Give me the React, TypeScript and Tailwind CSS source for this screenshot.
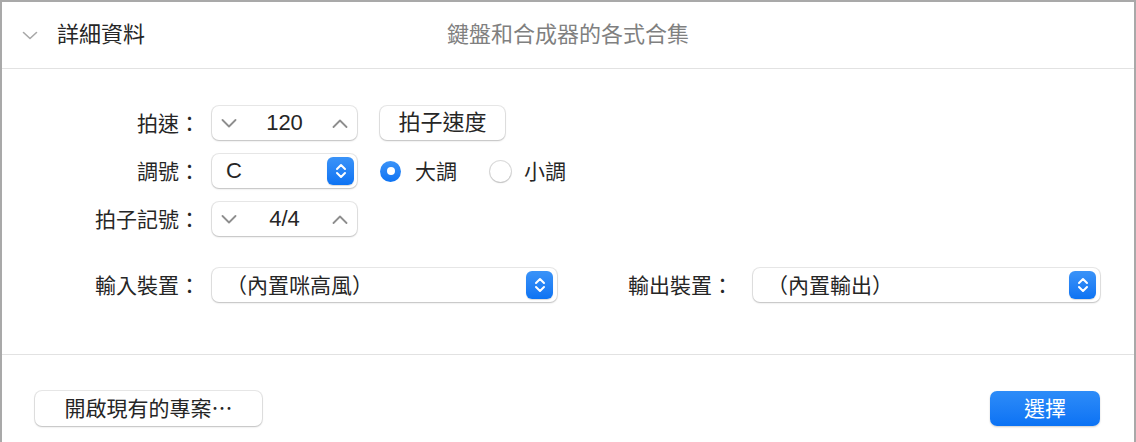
import React from "react";

const font = { fontFamily: '"Liberation Sans", "Noto Sans CJK TC", sans-serif' };

function Chevron({ up = false, className = "" }: { up?: boolean; className?: string }) {
  return (
    <svg width="16" height="9" viewBox="0 0 16 9" className={className}>
      <path
        d={up ? "M1.5 8 L8 1.5 L14.5 8" : "M1.5 1 L8 7.5 L14.5 1"}
        fill="none"
        stroke="#8e8e8e"
        strokeWidth="1.8"
        strokeLinecap="round"
        strokeLinejoin="round"
      />
    </svg>
  );
}

function BlueArrows() {
  return (
    <div className="w-[27px] h-[28px] rounded-[6px] bg-linear-to-b from-[#3a93f8] to-[#0b73f3] flex items-center justify-center shadow-[0_1px_1px_rgba(0,0,0,0.15)]">
      <svg width="14" height="20" viewBox="0 0 14 20">
        <path d="M3 8 L7 4 L11 8" fill="none" stroke="#fff" strokeWidth="2" strokeLinecap="round" strokeLinejoin="round" />
        <path d="M3 12 L7 16 L11 12" fill="none" stroke="#fff" strokeWidth="2" strokeLinecap="round" strokeLinejoin="round" />
      </svg>
    </div>
  );
}

const ctrl =
  "bg-white rounded-[7px] shadow-[0_0_0_1px_rgba(0,0,0,0.09),0_1px_2px_rgba(0,0,0,0.18)]";

function Stepper({ value }: { value: string }) {
  return (
    <div className={`${ctrl} w-[145px] h-[34px] flex items-center justify-between px-[9px]`}>
      <Chevron />
      <span className="text-[22px] leading-none text-[#262626]">{value}</span>
      <Chevron up />
    </div>
  );
}

function Label({ children, w = "w-[198px]" }: { children: React.ReactNode; w?: string }) {
  return <div className={`${w} text-right text-[21px] leading-none text-[#262626] shrink-0`}>{children}</div>;
}

export default function App() {
  return (
    <div className="w-[1136px] h-[442px] bg-white" style={font}>
      <div className="w-[1136px] h-[442px] border-l-2 border-t-2 border-r-[2px] border-[#a9a9a9] flex flex-col overflow-hidden">
        {/* header */}
        <div className="h-[67px] shrink-0 border-b border-[#e2e2e2] grid grid-cols-[1fr_auto_1fr] items-center">
          <div className="flex items-center pl-[20px]">
            <svg width="16" height="9" viewBox="0 0 16 9">
              <path d="M1.5 1.5 L8 7.5 L14.5 1.5" fill="none" stroke="#a8a8a8" strokeWidth="1.6" strokeLinecap="round" strokeLinejoin="round" />
            </svg>
            <span className="ml-[19px] text-[22px] leading-none text-[#262626]">詳細資料</span>
          </div>
          <div className="text-[22px] leading-none text-[#808080]">鍵盤和合成器的各式合集</div>
          <div />
        </div>

        {/* body */}
        <div className="h-[286px] shrink-0 border-b border-[#e2e2e2] pt-[37px] flex flex-col">
          <div className="flex items-center h-[34px]">
            <Label>拍速：</Label>
            <div className="ml-[12px]"><Stepper value="120" /></div>
            <div className={`${ctrl} ml-[23px] w-[125px] h-[34px] flex items-center justify-center text-[22px] leading-none text-[#262626]`}>
              拍子速度
            </div>
          </div>

          <div className="flex items-center h-[34px] mt-[14px]">
            <Label>調號：</Label>
            <div className={`${ctrl} ml-[12px] w-[145px] h-[34px] flex items-center justify-between pl-[14px] pr-[3px]`}>
              <span className="text-[22px] leading-none text-[#262626]">C</span>
              <BlueArrows />
            </div>
            <div className="ml-[23px] flex items-center">
              <div className="w-[21px] h-[21px] rounded-full bg-linear-to-b from-[#3a93f8] to-[#0b73f3] flex items-center justify-center">
                <div className="w-[8px] h-[8px] rounded-full bg-white" />
              </div>
              <span className="ml-[14px] text-[21px] leading-none text-[#262626]">大調</span>
            </div>
            <div className="ml-[33px] flex items-center">
              <div className="w-[21px] h-[21px] rounded-full bg-white shadow-[0_0_0_1px_rgba(0,0,0,0.14),0_1px_2px_rgba(0,0,0,0.12)]" />
              <span className="ml-[13px] text-[21px] leading-none text-[#262626]">小調</span>
            </div>
          </div>

          <div className="flex items-center h-[34px] mt-[14px]">
            <Label>拍子記號：</Label>
            <div className="ml-[12px]"><Stepper value="4/4" /></div>
          </div>

          <div className="flex items-center h-[34px] mt-[32px]">
            <Label>輸入裝置：</Label>
            <div className={`${ctrl} ml-[12px] w-[345px] h-[34px] flex items-center justify-between pl-[14px] pr-[4px]`}>
              <span className="text-[21px] leading-none text-[#262626]">（內置咪高風）</span>
              <BlueArrows />
            </div>
            <Label w="w-[176px]">輸出裝置：</Label>
            <div className={`${ctrl} ml-[20px] w-[347px] h-[34px] flex items-center justify-between pl-[14px] pr-[4px]`}>
              <span className="text-[21px] leading-none text-[#262626]">（內置輸出）</span>
              <BlueArrows />
            </div>
          </div>
        </div>

        {/* footer */}
        <div className="flex-1 flex items-start justify-between pt-[36px] pl-[33px] pr-[34px]">
          <div className={`${ctrl} w-[227px] h-[35px] flex items-center justify-center text-[21px] leading-none text-[#262626]`}>
            開啟現有的專案⋯
          </div>
          <div className="w-[110px] h-[35px] rounded-[7px] bg-linear-to-b from-[#2d8cf8] to-[#0a72f4] shadow-[0_1px_2px_rgba(0,0,0,0.2)] flex items-center justify-center text-[21px] leading-none text-white">
            選擇
          </div>
        </div>
      </div>
    </div>
  );
}
